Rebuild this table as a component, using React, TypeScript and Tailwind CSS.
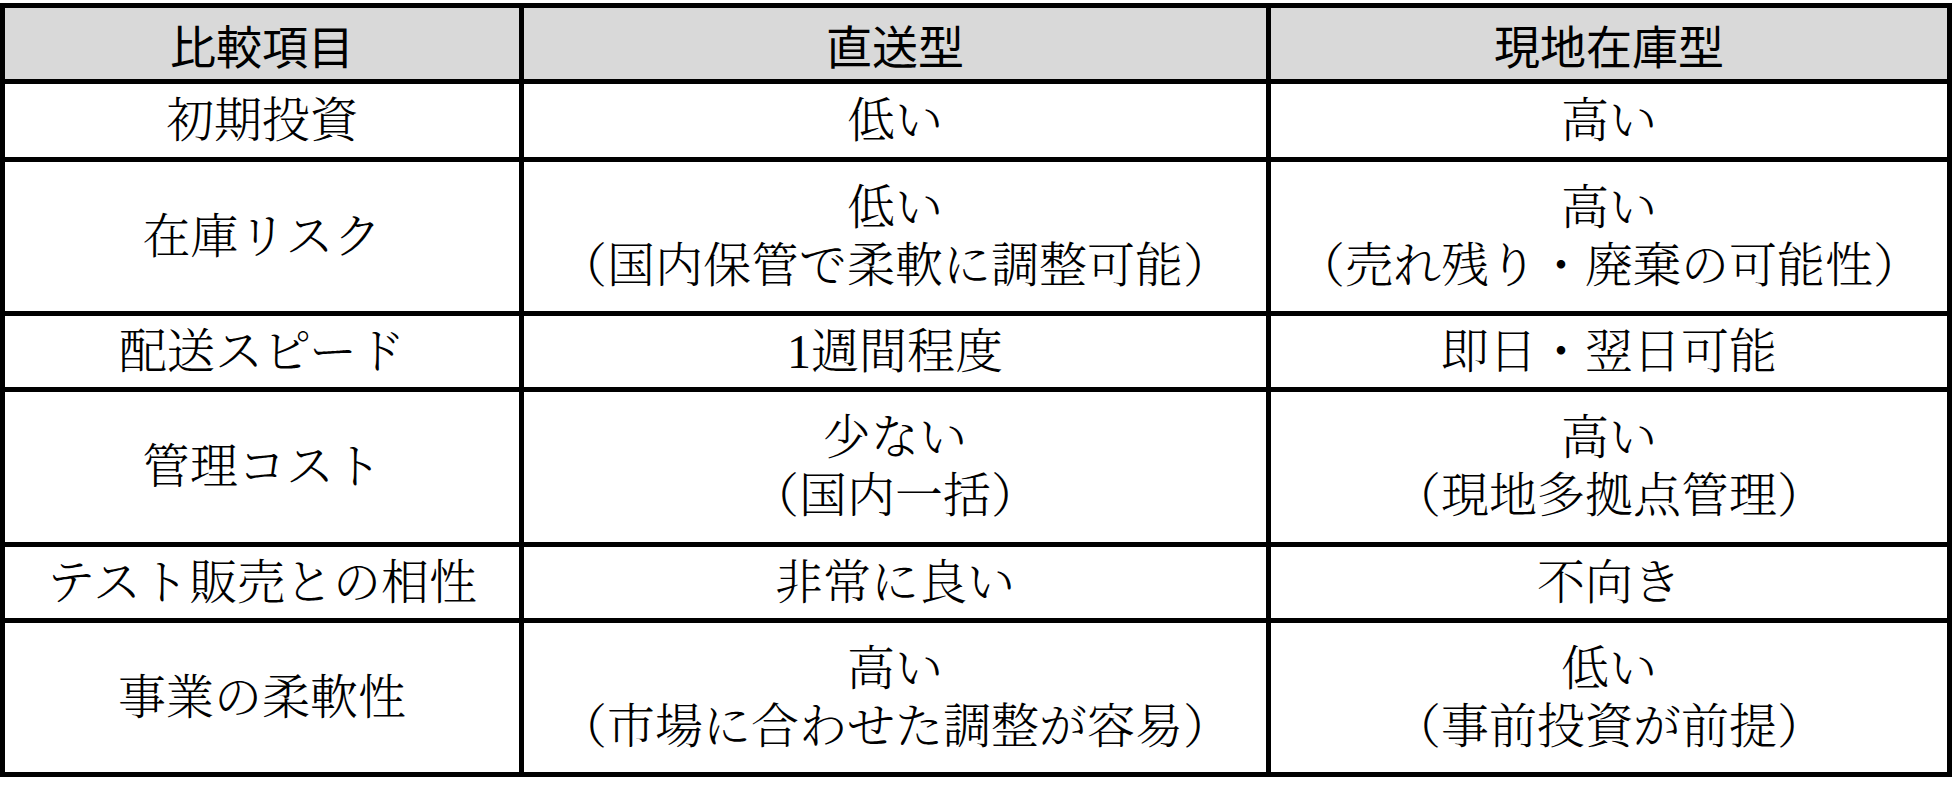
import React from "react";

const rows: [string, string[], string[], string[]][] = [
  ["初期投資", ["初期投資"], ["低い"], ["高い"]],
  ["在庫リスク", ["在庫リスク"], ["低い", "（国内保管で柔軟に調整可能）"], ["高い", "（売れ残り・廃棄の可能性）"]],
  ["配送スピード", ["配送スピード"], ["1週間程度"], ["即日・翌日可能"]],
  ["管理コスト", ["管理コスト"], ["少ない", "（国内一括）"], ["高い", "（現地多拠点管理）"]],
  ["テスト販売", ["テスト販売との相性"], ["非常に良い"], ["不向き"]],
  ["事業の柔軟性", ["事業の柔軟性"], ["高い", "（市場に合わせた調整が容易）"], ["低い", "（事前投資が前提）"]],
];

function Cell({ lines }: { lines: string[] }) {
  return (
    <div className="bg-white flex flex-col items-center justify-center text-center text-black text-[48px] leading-[58px] font-light font-['Liberation_Serif','Noto_Serif_CJK_JP','Noto_Sans_CJK_JP',serif]">
      {lines.map((l, i) => (
        <div key={i}>{l}</div>
      ))}
    </div>
  );
}

export default function App() {
  return (
    <div className="w-[1954px] h-[785px] bg-white pt-[3px]">
      <div className="w-[1952px] bg-black p-[5px] grid gap-[5px] grid-cols-[514px_742px_676px] grid-rows-[71px_73px_149px_71px_150px_71px_149px]">
        {["比較項目", "直送型", "現地在庫型"].map((h) => (
          <div
            key={h}
            className="bg-[#d9d9d9] flex items-center justify-center text-black text-[46px] leading-none font-['Noto_Sans_CJK_JP',sans-serif]"
          >
            {h}
          </div>
        ))}
        {rows.map((r) => (
          <React.Fragment key={r[0]}>
            <Cell lines={r[1]} />
            <Cell lines={r[2]} />
            <Cell lines={r[3]} />
          </React.Fragment>
        ))}
      </div>
    </div>
  );
}
